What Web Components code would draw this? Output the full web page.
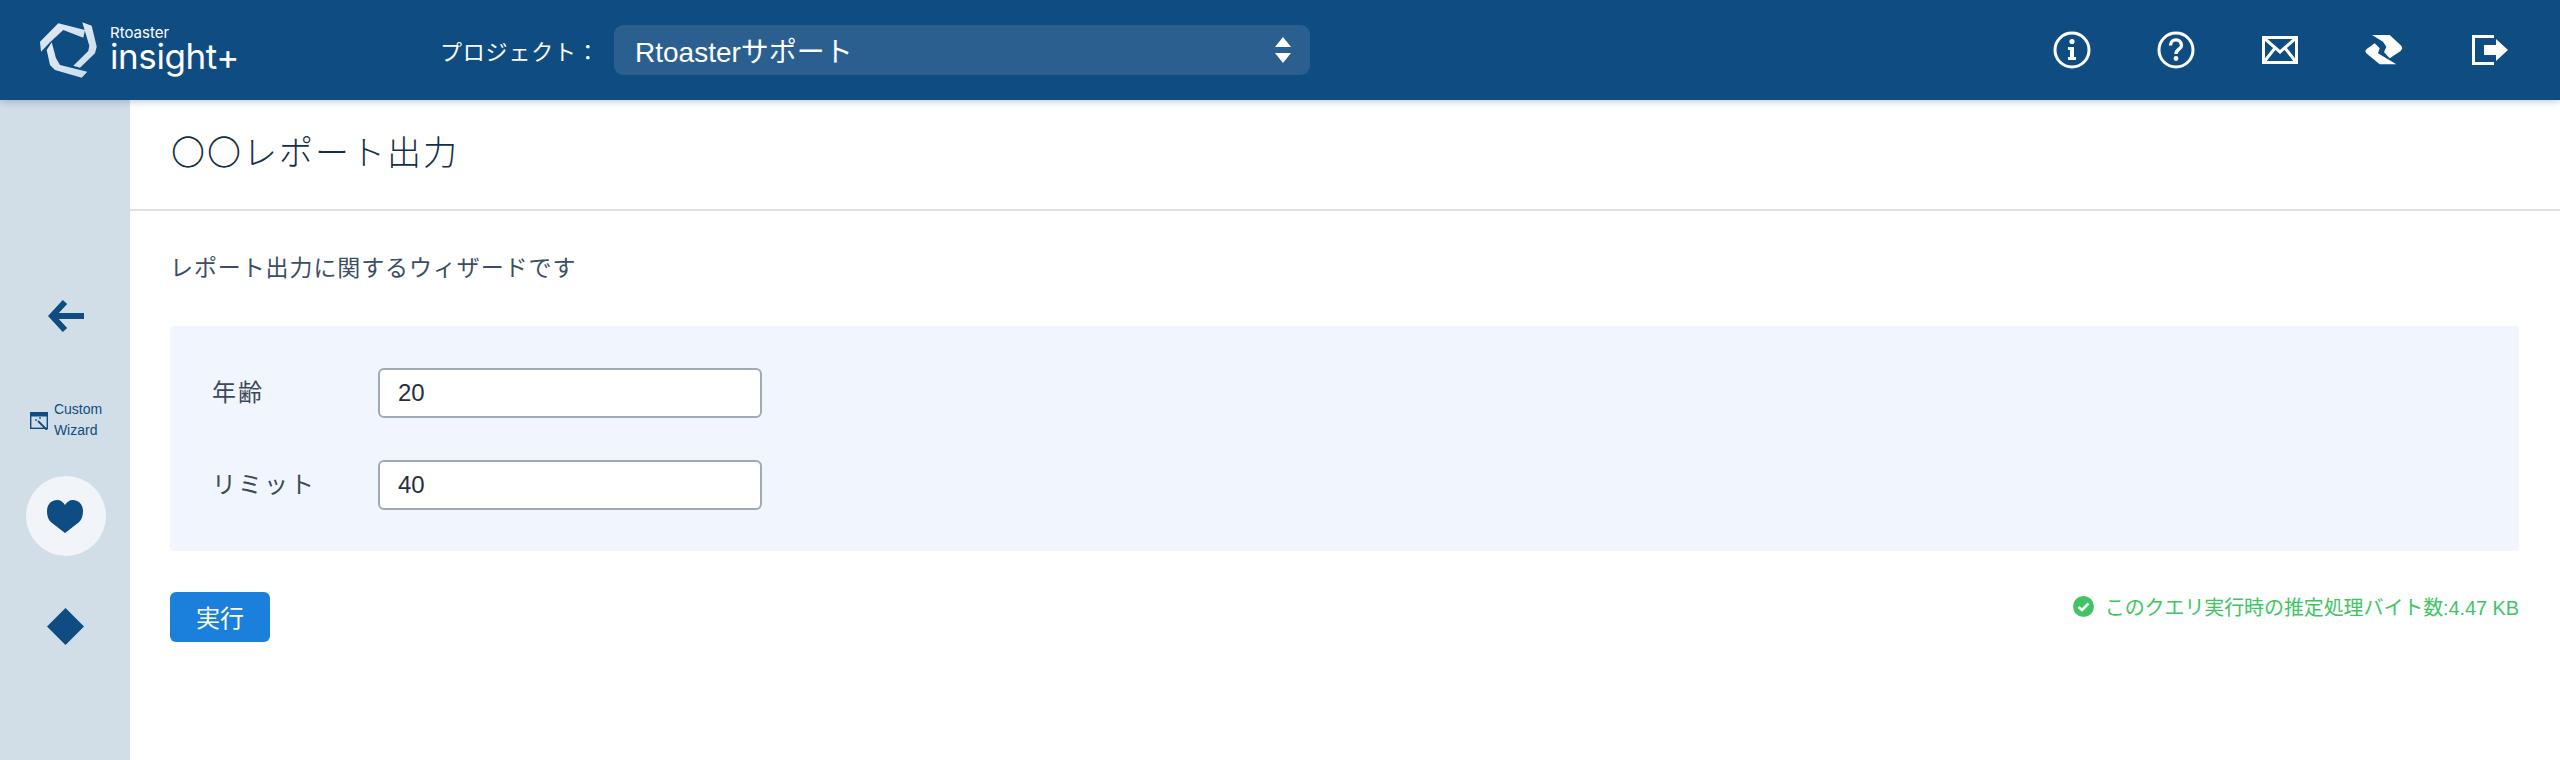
<!DOCTYPE html>
<html lang="ja">
<head>
<meta charset="utf-8">
<title>Report</title>
<style>
  html, body { margin: 0; height: 100%; }
  body {
    font-family: "Liberation Sans", "Noto Sans CJK JP", sans-serif;
    color: #243f55;
    background: #fff;
  }
</style>
</head>
<body>
<app-shell>
  <app-header slot="header" project="Rtoasterサポート"></app-header>
  <app-sidebar slot="sidebar"></app-sidebar>
  <report-page slot="main" heading="〇〇レポート出力" lead="レポート出力に関するウィザードです">
    <form-row label="年齢" value="20"></form-row>
    <form-row label="リミット" value="40"></form-row>
  </report-page>
</app-shell>

<script>
  class AppShell extends HTMLElement {
    constructor() {
      super();
      this.attachShadow({ mode: 'open' });
      this.shadowRoot.innerHTML = `
        <style>
          :host {
            display: grid;
            grid-template: 100px 660px / 130px 1fr;
            height: 760px;
          }
          .top { grid-column: 1 / 3; position: relative; z-index: 2; }
        </style>
        <div class="top"><slot name="header"></slot></div>
        <slot name="sidebar"></slot>
        <slot name="main"></slot>
      `;
    }
  }

  class AppHeader extends HTMLElement {
    constructor() {
      super();
      this.attachShadow({ mode: 'open' });
    }

    connectedCallback() {
      this.shadowRoot.innerHTML = `
        <style>
          :host {
            display: flex;
            align-items: center;
            height: 100px;
            background: #0f4c81;
            color: #fff;
            box-shadow: 0 1px 8px rgba(15, 60, 100, .3);
          }
          .logo { display: flex; align-items: center; width: 440px; padding-left: 40px; box-sizing: border-box; gap: 13px; }
          .logo svg { width: 57px; height: 56px; flex: none; }
          .word { display: flex; flex-direction: column; font-family: Inter, sans-serif; line-height: 1; margin-top: -1px; }
          .word small { font-size: 15px; line-height: 13px; }
          .word b { font-size: 35px; font-weight: 400; line-height: 35px; letter-spacing: -.4px; }
          .label { font-size: 22px; width: 174px; letter-spacing: .8px; white-space: nowrap; }
          .select {
            display: flex; align-items: center; justify-content: space-between;
            width: 696px; height: 50px; box-sizing: border-box;
            padding: 0 18px 0 21px;
            background: #2a5f8f; border-radius: 9px;
            font-size: 28px;
          }
          .select svg { width: 18px; height: 28px; }
          .tools { margin-left: auto; display: flex; align-items: center; padding-right: 20px; }
          .tools svg { display: block; width: 104px; height: 40px; }
        </style>
        <div class="logo">
          <svg viewBox="0 0 57 56">
            <defs>
              <linearGradient id="g" x1="0" y1="0" x2="1" y2="1">
                <stop offset="0" stop-color="#e3ecf5"/><stop offset="1" stop-color="#c9dbeb"/>
              </linearGradient>
            </defs>
            <path fill="url(#g)" d="M0 19.700 L18.300 1.300 L45 8 L43.300 15.700 L23.300 8 L10 20.300 L1 29.700 Z"/>
            <path fill="url(#g)" d="M42.300 .3 L51.700 3.700 L56.700 24.700 L55 31.300 L40 45.700 L33.300 43.700 L48.300 29 L49.300 23.700 Z"/>
            <path fill="url(#g)" d="M11.700 20.300 L16 36.300 L20 43 L47.300 49.700 L41.700 55.700 L15 48 L10 43 L6.700 28 Z"/>
          </svg>
          <div class="word"><small>Rtoaster</small><b>insight+</b></div>
        </div>
        <span class="label">プロジェクト：</span>
        <div class="select">
          <span>${this.getAttribute('project')}</span>
          <svg viewBox="0 0 18 28" fill="#fff"><path d="M9 1 L17 11 H1 Z M1 17 H17 L9 27 Z"/></svg>
        </div>
        <div class="tools">
          <svg viewBox="-52 -20 104 40"><circle r="17" fill="none" stroke="#fff" stroke-width="3"/><circle cy="-8.500" r="2.600" fill="#fff"/><path fill="#fff" d="M-4 -3 H2 V7 H4 V10 H-4 V7 H-2 V0 H-4 Z"/></svg>
          <svg viewBox="-52 -20 104 40"><circle r="17" fill="none" stroke="#fff" stroke-width="3"/><path fill="none" stroke="#fff" stroke-width="3.400" d="M-5.500 -4.500 C-5.500 -12 5.500 -12 5.500 -4.500 C5.500 -.5 0 -1 0 4"/><circle cy="8.500" r="2.400" fill="#fff"/></svg>
          <svg viewBox="-52 -20 104 40"><path fill="none" stroke="#fff" stroke-width="3" d="M-16.500 -12.500 H16.500 V12.500 H-16.500 Z M-16 -12 L0 2 L16 -12 M-16 12 L-5 -2 M16 12 L5 -2"/></svg>
          <svg viewBox="-52 -20 104 40"><path fill="#fff" d="M-12 -15 H5.700 L17.300 -4.300 L18.300 -1.700 L16.700 1 L5.700 8.300 L0 2.300 L2.300 -3.300 L-1 -8.300 Z"/><path fill="#fff" d="M-9.300 -6.700 L-4.300 -1.700 L-6 3.300 L12.300 14.300 H-4.300 L-17.700 3.300 L-18.700 1 L-17.300 -1 Z"/></svg>
          <svg viewBox="-52 -20 104 40"><path fill="none" stroke="#fff" stroke-width="3" d="M6 -13.500 H-14.500 V13.500 H6"/><path fill="#fff" d="M-4 -5 H8 V-11 L20 0 L8 11 V5 H-4 Z"/></svg>
        </div>
      `;
    }
  }

  class SideItem extends HTMLElement {
    constructor() {
      super();
      this.attachShadow({ mode: 'open' });
      this.shadowRoot.innerHTML = `
        <style>
          :host { display: flex; align-items: center; justify-content: center; width: 80px; height: 80px; border-radius: 50%; }
          :host([active]) { background: #f1f4f9; margin-left: 2px; }
          ::slotted(svg) { display: block; }
        </style>
        <slot></slot>
      `;
    }
  }

  class AppSidebar extends HTMLElement {
    constructor() {
      super();
      this.attachShadow({ mode: 'open' });
      this.shadowRoot.innerHTML = `
        <style>
          :host {
            display: flex; flex-direction: column; align-items: center;
            background: #d1dee8; padding-top: 176px; height: 660px; box-sizing: border-box;
            color: #0f4c81;
          }
          svg { display: block; }
          .wizard { display: flex; align-items: center; gap: 6px; margin: 32px 0 24px 2px; font-size: 14px; line-height: 21px; height: 64px; }
          side-item + side-item { margin-top: 30px; }
          .wizard svg { margin-top: 2px; }
          .back { margin-left: 2px; }
          .heart { margin-left: -2px; }
        </style>
        <side-item>
          <svg class="back" width="36" height="32" viewBox="0 0 36 32" fill="none" stroke="#0f4c81" stroke-width="6"><path d="M36 16 H4"/><path d="M17 2 L4 16 L17 30"/></svg>
        </side-item>
        <div class="wizard">
          <svg width="18" height="18" viewBox="0 0 18 18"><rect x=".7" y=".7" width="16.600" height="15.600" fill="none" stroke="#0f4c81" stroke-width="1.400"/><rect x="1" y="1" width="16" height="3.500" fill="#0f4c81"/><path d="M8 9 L17 18" stroke="#0f4c81" stroke-width="1.800"/><path d="M5 8 H7 M6 7 V9 M9 6 H11 M10 5 V7" stroke="#0f4c81" stroke-width=".8"/></svg>
          <span>Custom<br>Wizard</span>
        </div>
        <side-item active>
          <svg class="heart" width="36" height="33" viewBox="0 0 36 33"><path fill="#0f4c81" d="M18 33 L5 23 C1 20 0 15 0 11 C0 4 5 0 10 0 C14 0 16 2 18 5 C20 2 22 0 26 0 C31 0 36 4 36 11 C36 15 35 20 31 23 Z"/></svg>
        </side-item>
        <side-item>
          <svg width="37" height="37" viewBox="0 0 37 37"><path fill="#0f4c81" d="M18.500 0 L37 18.500 L18.500 37 L0 18.500 Z"/></svg>
        </side-item>
      `;
    }
  }

  class FormRow extends HTMLElement {
    constructor() {
      super();
      this.attachShadow({ mode: 'open' });
    }

    connectedCallback() {
      this.shadowRoot.innerHTML = `
        <style>
          :host { display: flex; align-items: center; height: 50px; }
          label { width: 166px; font-size: 24px; letter-spacing: 2px; color: #3c4a57; margin-top: -5px; }
          input {
            width: 384px; height: 50px; box-sizing: border-box;
            border: 2px solid #9eaab6; border-radius: 6px; padding: 0 18px;
            font: 24px "Liberation Sans", sans-serif; color: #243040; background: #fff;
          }
        </style>
        <label>${this.getAttribute('label')}</label>
        <input value="${this.getAttribute('value')}">
      `;
    }
  }

  class ReportPage extends HTMLElement {
    constructor() {
      super();
      this.attachShadow({ mode: 'open' });
    }

    connectedCallback() {
      this.shadowRoot.innerHTML = `
        <style>
          :host { display: block; min-width: 0; }
          .head { height: 109px; border-bottom: 2px solid #e0e0e6; padding-left: 41px; display: flex; align-items: center; }
          h1 { margin: 0 0 8px; font-size: 34px; font-weight: 300; letter-spacing: 2px; color: #12304a; }
          .body { padding: 0 41px 0 40px; }
          p { margin: 0; height: 115px; padding-bottom: 5px; box-sizing: border-box; display: flex; align-items: center; font-size: 23px; font-weight: 400; letter-spacing: .9px; color: #3a4f63; }
          .panel { background: #f1f5fd; border-radius: 4px; padding: 42px; height: 225px; box-sizing: border-box; display: flex; flex-direction: column; gap: 42px; }
          .foot { display: flex; justify-content: space-between; align-items: center; margin-top: 41px; }
          button {
            width: 100px; height: 50px; border: 0; border-radius: 6px; background: #1b80dc; color: #fff;
            padding: 0 0 2px;
            font: 24px "Liberation Sans", "Noto Sans CJK JP", sans-serif;
          }
          .status { display: flex; align-items: center; gap: 11px; color: #41c464; font-size: 20px; font-weight: 400; letter-spacing: -.1px; margin-top: -22px; }
        </style>
        <div class="head"><h1>${this.getAttribute('heading')}</h1></div>
        <div class="body">
          <p>${this.getAttribute('lead')}</p>
          <div class="panel"><slot></slot></div>
          <div class="foot">
            <button>実行</button>
            <div class="status">
              <svg width="21" height="21" viewBox="0 0 21 21"><circle cx="10.500" cy="10.500" r="10.500" fill="#41c464"/><path d="M5.500 11 L9 14 L15.500 7.500" fill="none" stroke="#fff" stroke-width="2.600"/></svg>
              <span>このクエリ実行時の推定処理バイト数:4.47 KB</span>
            </div>
          </div>
        </div>
      `;
    }
  }

  customElements.define('app-shell', AppShell);
  customElements.define('app-header', AppHeader);
  customElements.define('side-item', SideItem);
  customElements.define('app-sidebar', AppSidebar);
  customElements.define('form-row', FormRow);
  customElements.define('report-page', ReportPage);
</script>
</body>
</html>
